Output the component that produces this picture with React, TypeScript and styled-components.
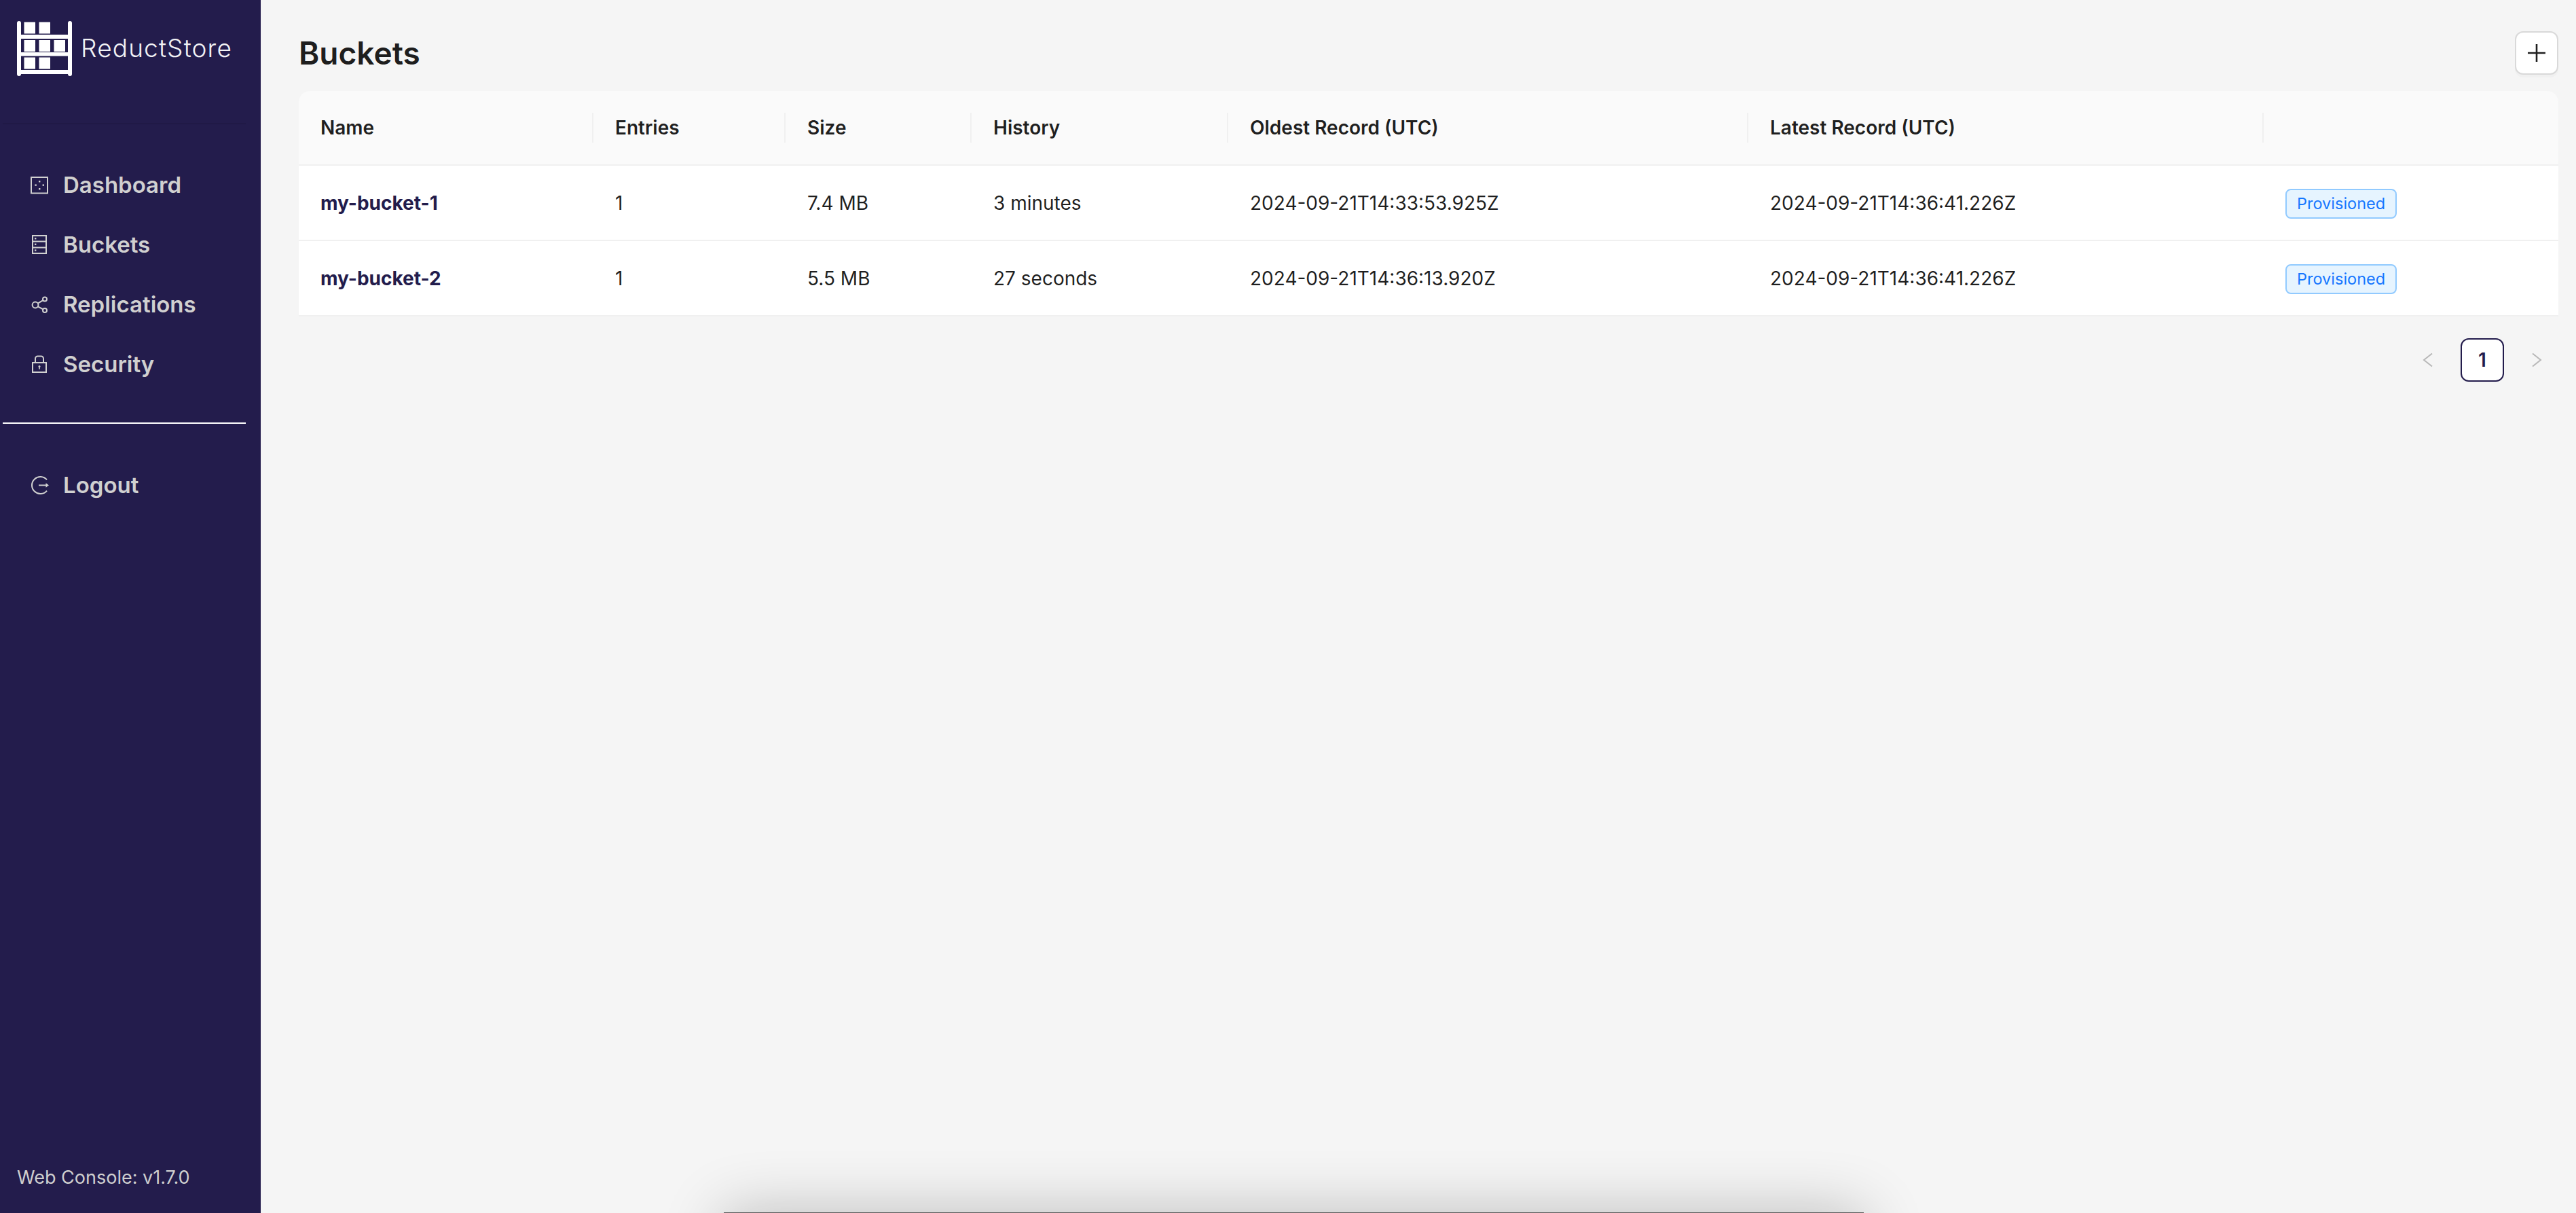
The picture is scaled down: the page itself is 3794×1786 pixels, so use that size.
import React from "react";
import styled, { createGlobalStyle } from "styled-components";

const Global = createGlobalStyle`
  html, body { margin: 0; padding: 0; background: #f5f5f5; }
  body { font-family: Inter, "Liberation Sans", sans-serif; color: rgba(0,0,0,0.88); }
  * { box-sizing: border-box; }
`;

const Page = styled.div`
  position: relative;
  display: flex;
  width: 3794px;
  height: 1786px;
  overflow: hidden;
  background: #f5f5f5;
`;

const Sidebar = styled.aside`
  display: flex;
  flex-direction: column;
  flex: 0 0 384px;
  background: #231c4c;
  color: #d0d0d0;
`;

const Brand = styled.div`
  display: flex;
  align-items: flex-start;
  gap: 12px;
  height: 181px;
  padding: 31px 0 0 25px;
`;

const BrandName = styled.span`
  margin-top: 18px;
  font-family: Inter, sans-serif;
  font-size: 37px;
  font-weight: 300;
  line-height: 44px;
  letter-spacing: 1.15px;
  color: #f2f2f5;
`;

const Rule = styled.hr<{ $light?: boolean }>`
  flex: none;
  width: 358px;
  height: 2px;
  margin: 0 0 0 4px;
  border: 0;
  background: ${(p) => (p.$light ? "#ffffff" : "rgba(5,5,5,0.08)")};
`;

const Menu = styled.nav<{ $top: number }>`
  display: flex;
  flex-direction: column;
  gap: 8px;
  margin-top: ${(p) => p.$top}px;
`;

const MenuItem = styled.a`
  display: flex;
  align-items: center;
  gap: 21px;
  height: 80px;
  padding-left: 44px;
  font-size: 33px;
  font-weight: 600;
  color: #d0d0d0;
`;

const MenuIcon = styled.svg`
  flex: none;
  width: 28px;
  height: 28px;
  fill: none;
  stroke: currentColor;
  stroke-width: 2;
`;

const Version = styled.div`
  margin-top: auto;
  padding: 0 0 30px 25px;
  font-size: 27px;
  line-height: 44px;
  color: #cfcfcf;
`;

const Main = styled.main`
  display: flex;
  flex-direction: column;
  flex: 1;
  padding: 46px 26px 0 56px;
`;

const Header = styled.header`
  display: flex;
  align-items: center;
  justify-content: space-between;
  height: 64px;
  margin-bottom: 24px;
`;

const Title = styled.h1`
  margin: 0;
  font-size: 46px;
  font-weight: 600;
  line-height: 64px;
  color: rgba(0,0,0,0.88);
`;

const AddButton = styled.button`
  display: flex;
  align-items: center;
  justify-content: center;
  width: 64px;
  height: 64px;
  padding: 0;
  background: #fff;
  border: 2px solid #d9d9d9;
  border-radius: 12px;
  box-shadow: 0 4px 0 rgba(0,0,0,0.02);
  color: rgba(0,0,0,0.88);
`;

const Table = styled.table`
  width: 3328px;
  table-layout: fixed;
  border-collapse: separate;
  border-spacing: 0;
  font-size: 28px;
  line-height: 44px;
`;

const HeadCell = styled.th`
  position: relative;
  height: 110px;
  padding: 0 32px;
  text-align: left;
  font-weight: 600;
  background: #fafafa;
  border-bottom: 2px solid #f0f0f0;
  &:first-child { border-top-left-radius: 16px; }
  &:last-child { border-top-right-radius: 16px; }
  &:not(:last-child)::before {
    content: "";
    position: absolute;
    top: 32px;
    right: 0;
    width: 2px;
    height: 44px;
    background: #f0f0f0;
  }
`;

const Cell = styled.td`
  height: 111px;
  padding: 0 32px;
  background: #fff;
  border-bottom: 2px solid #f0f0f0;
  font-weight: 400;
`;

const BucketLink = styled.a`
  font-weight: 700;
  color: #231c4c;
`;

const Tag = styled.span`
  display: inline-block;
  height: 44px;
  padding: 0 15px;
  font-size: 23.5px;
  line-height: 40px;
  vertical-align: middle;
  color: #1677ff;
  background: #e6f4ff;
  border: 2px solid #91caff;
  border-radius: 8px;
`;

const Pager = styled.div`
  display: flex;
  justify-content: flex-end;
  gap: 16px;
  margin-top: 32px;
`;

const PagerArrow = styled.span`
  display: flex;
  align-items: center;
  justify-content: center;
  width: 64px;
  height: 64px;
  color: rgba(0,0,0,0.25);
`;

const PagerCurrent = styled.span`
  display: flex;
  align-items: center;
  justify-content: center;
  width: 64px;
  height: 64px;
  background: #fff;
  border: 2px solid #231c4c;
  border-radius: 12px;
  font-size: 28px;
  font-weight: 600;
  color: #231c4c;
`;

const WindowEdge = styled.div`
  position: absolute;
  left: 1066px;
  top: 1785px;
  width: 1679px;
  height: 240px;
  background: #5a5a5a;
  box-shadow: 0 0 90px rgba(0,0,0,0.24);
`;

const Logo = () => (
  <svg width="82" height="82" viewBox="0 0 82 82" fill="#fff" aria-hidden="true">
    <rect x="0" y="0" width="6" height="81" rx="3" />
    <rect x="75" y="0" width="6" height="81" rx="3" />
    <rect x="3" y="20" width="75" height="6" />
    <rect x="3" y="46" width="75" height="5.5" />
    <rect x="3" y="72" width="75" height="6" />
    <rect x="10.5" y="1.5" width="16.5" height="17" />
    <rect x="32.5" y="1.5" width="16.5" height="17" />
    <rect x="10.5" y="28" width="16.5" height="17" />
    <rect x="32.5" y="28" width="16.5" height="17" />
    <rect x="54.5" y="28" width="16.5" height="17" />
    <rect x="10.5" y="53.5" width="16.5" height="17" />
    <rect x="32.5" y="53.5" width="16.5" height="17" />
  </svg>
);

const DashboardIcon = () => (
  <MenuIcon viewBox="0 0 28 28">
    <rect x="2" y="3" width="24" height="23.5" />
    <g fill="currentColor" stroke="none">
      <rect x="13" y="8" width="2.4" height="2.4" />
      <rect x="7.4" y="13.4" width="2.4" height="2.4" />
      <rect x="18.6" y="13.4" width="2.4" height="2.4" />
      <rect x="13" y="19" width="2.4" height="2.4" />
    </g>
  </MenuIcon>
);

const BucketsIcon = () => (
  <MenuIcon viewBox="0 0 28 28">
    <rect x="4" y="1" width="20" height="26" />
    <path d="M4 9.5h20M4 18.5h20" />
    <g fill="currentColor" stroke="none">
      <rect x="7" y="4" width="2.4" height="2.4" />
      <rect x="7" y="12.6" width="2.4" height="2.4" />
      <rect x="7" y="21.4" width="2.4" height="2.4" />
    </g>
  </MenuIcon>
);

const ReplicationIcon = () => (
  <MenuIcon viewBox="0 0 28 28">
    <circle cx="8" cy="15" r="4.4" />
    <circle cx="22" cy="6.6" r="3" />
    <circle cx="22" cy="23" r="3" />
    <path d="M11.8 12.7 19.4 8.2M11.8 17.3 19.4 21.4" />
  </MenuIcon>
);

const LockIcon = () => (
  <MenuIcon viewBox="0 0 28 28">
    <rect x="4" y="12" width="20" height="14" />
    <path d="M8 12V6a3.5 3.5 0 0 1 3.5-3.5h5A3.5 3.5 0 0 1 20 6v6" />
    <g fill="currentColor" stroke="none">
      <circle cx="14" cy="17.6" r="1.5" />
      <rect x="13.2" y="18" width="1.6" height="3.6" />
    </g>
  </MenuIcon>
);

const LogoutIcon = () => (
  <MenuIcon viewBox="0 0 28 28">
    <path d="M25 6.4A12.5 12.5 0 1 0 25 22.6" />
    <path d="M13 14.5h13" />
    <path d="M23.5 11.2 28 14.5l-4.5 3.3z" fill="currentColor" stroke="none" />
  </MenuIcon>
);

const Plus = () => (
  <svg width="28" height="28" viewBox="0 0 28 28" fill="none" stroke="currentColor" strokeWidth="2.6" aria-hidden="true">
    <path d="M14 1v26M1 14h26" />
  </svg>
);

const Chevron = ({ right }: { right?: boolean }) => (
  <svg width="16" height="22" viewBox="0 0 16 22" fill="none" stroke="currentColor" strokeWidth="2" aria-hidden="true">
    <path d={right ? "M2 1.5 14 11 2 20.5" : "M14 1.5 2 11l12 9.5"} />
  </svg>
);

const columns = [434, 283, 274, 378, 766, 759, 434];
const heads = ["Name", "Entries", "Size", "History", "Oldest Record (UTC)", "Latest Record (UTC)", ""];
const rows = [
  { name: "my-bucket-1", entries: "1", size: "7.4 MB", history: "3 minutes", oldest: "2024-09-21T14:33:53.925Z", latest: "2024-09-21T14:36:41.226Z" },
  { name: "my-bucket-2", entries: "1", size: "5.5 MB", history: "27 seconds", oldest: "2024-09-21T14:36:13.920Z", latest: "2024-09-21T14:36:41.226Z" },
];

export default function App() {
  return (
    <Page>
      <Global />
      <Sidebar>
        <Brand>
          <Logo />
          <BrandName>ReductStore</BrandName>
        </Brand>
        <Rule />
        <Menu $top={49}>
          <MenuItem><DashboardIcon />Dashboard</MenuItem>
          <MenuItem><BucketsIcon />Buckets</MenuItem>
          <MenuItem><ReplicationIcon />Replications</MenuItem>
          <MenuItem><LockIcon />Security</MenuItem>
        </Menu>
        <Menu as="div" $top={46}>
          <Rule $light />
        </Menu>
        <Menu $top={50}>
          <MenuItem><LogoutIcon />Logout</MenuItem>
        </Menu>
        <Version>Web Console: v1.7.0</Version>
      </Sidebar>
      <Main>
        <Header>
          <Title>Buckets</Title>
          <AddButton aria-label="Add bucket"><Plus /></AddButton>
        </Header>
        <Table>
          <colgroup>
            {columns.map((w, i) => (
              <col key={i} style={{ width: w }} />
            ))}
          </colgroup>
          <thead>
            <tr>
              {heads.map((h, i) => (
                <HeadCell key={i}>{h}</HeadCell>
              ))}
            </tr>
          </thead>
          <tbody>
            {rows.map((r) => (
              <tr key={r.name}>
                <Cell><BucketLink>{r.name}</BucketLink></Cell>
                <Cell>{r.entries}</Cell>
                <Cell>{r.size}</Cell>
                <Cell>{r.history}</Cell>
                <Cell>{r.oldest}</Cell>
                <Cell>{r.latest}</Cell>
                <Cell><Tag>Provisioned</Tag></Cell>
              </tr>
            ))}
          </tbody>
        </Table>
        <Pager>
          <PagerArrow><Chevron /></PagerArrow>
          <PagerCurrent>1</PagerCurrent>
          <PagerArrow><Chevron right /></PagerArrow>
        </Pager>
      </Main>
      <WindowEdge />
    </Page>
  );
}
